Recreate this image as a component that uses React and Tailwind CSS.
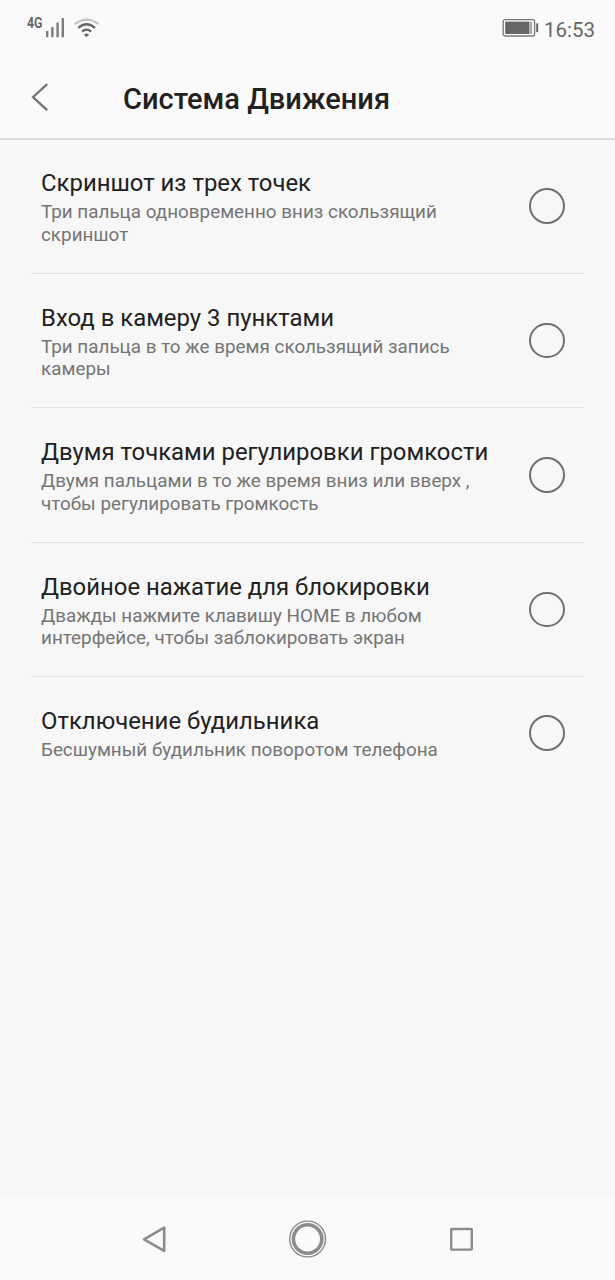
const settings = [
  {
    title: 'Скриншот из трех точек',
    lines: ['Три пальца одновременно вниз скользящий', 'скриншот'],
  },
  {
    title: 'Вход в камеру 3 пунктами',
    lines: ['Три пальца в то же время скользящий запись', 'камеры'],
  },
  {
    title: 'Двумя точками регулировки громкости',
    lines: ['Двумя пальцами в то же время вниз или вверх ,', 'чтобы регулировать громкость'],
  },
  {
    title: 'Двойное нажатие для блокировки',
    lines: ['Дважды нажмите клавишу HOME в любом', 'интерфейсе, чтобы заблокировать экран'],
  },
  {
    title: 'Отключение будильника',
    lines: ['Бесшумный будильник поворотом телефона'],
  },
];

function StatusBar() {
  return (
    <div className="flex h-14 items-start justify-between pl-[27px] pr-[20px] text-[#666]">
      <div className="flex pt-4">
        <span className="w-[18px] origin-left scale-x-88 text-[14px] leading-[14px] font-bold">4G</span>
        <svg className="h-[22px] w-[20px]" viewBox="0 0 20 22" fill="#7c7c7c">
          <rect x="1" y="15" width="2.4" height="6.3" rx="0.6" />
          <rect x="6.2" y="11" width="2.4" height="10.3" rx="0.6" />
          <rect x="11.4" y="6.5" width="2.4" height="14.8" rx="0.6" />
          <rect x="16.6" y="2" width="2.4" height="19.3" rx="0.6" />
        </svg>
        <svg className="ml-2 h-[22px] w-[28px]" viewBox="0 0 28 22" fill="none" strokeWidth="2.3">
          <path d="M1.7 8.2Q13.5 -1 25.6 8.2" stroke="#c4c4c4" />
          <path d="M5.2 12Q13.5 4.4 22 12" stroke="#666" />
          <path d="M9 15.7Q13.5 11.6 18.2 15.7" stroke="#666" />
          <path d="M11.4 18.6Q13.5 17.3 15.6 18.6L13.5 20.8Z" fill="#666" strokeWidth="1" stroke="#666" />
        </svg>
      </div>
      <div className="flex pt-[17px]">
        <svg className="h-[20px] w-[37px]" viewBox="0 0 37 20">
          <rect x="1.2" y="2.6" width="31.4" height="16.4" rx="2" fill="#fff" stroke="#777" strokeWidth="1.3" />
          <rect x="3.2" y="4.6" width="24" height="12.4" fill="#666" />
          <rect x="27.2" y="4.6" width="3" height="12.4" fill="#aaa" />
          <rect x="34.2" y="6.2" width="2" height="9" rx="0.7" fill="#666" />
        </svg>
        <span className="ml-[5px] pt-px text-[20.5px] leading-6">16:53</span>
      </div>
    </div>
  );
}

function Header() {
  return (
    <header className="flex h-[84px] items-center border-b-2 border-[#dedede] pl-[31px]">
      <svg className="h-7 w-[18px]" viewBox="0 0 18 28" fill="none" stroke="#757575" strokeWidth="2.3">
        <path d="M16.2 1.2L2 14.2L16.2 27.2" />
      </svg>
      <h1 className="ml-[74px] pt-[3px] text-[29px] leading-8 font-medium text-[#212121]">Система Движения</h1>
    </header>
  );
}

function SettingRow({ title, lines }) {
  return (
    <li className="mx-[31px] flex items-center justify-between border-b border-[#e2e2e2] pt-[29px] pr-[19.5px] pb-[27.1px] pl-[10px] last:border-b-0">
      <div>
        <h2 className="pb-[2px] text-[23.9px] leading-[31px] whitespace-nowrap text-[#212121]">{title}</h2>
        {lines.map((line) => (
          <p key={line} className="text-[18.85px] leading-[22.2px] whitespace-nowrap text-[#757575]">{line}</p>
        ))}
      </div>
      <span className="relative -top-[1px] size-[35.5px] shrink-0 rounded-full border-2 border-[#707070]" />
    </li>
  );
}

function NavBar() {
  return (
    <nav className="flex h-[82px] items-center justify-between bg-[#fafafa] pr-[140px] pl-[141px]">
      <svg className="h-7 w-[26px]" viewBox="0 0 26 28" fill="none" stroke="#8c8c8c" strokeWidth="2.6" strokeLinejoin="round">
        <path d="M23.2 2.7V25.9L3 14.3Z" />
      </svg>
      <svg className="size-[38px]" viewBox="0 0 38 38" fill="none" stroke="#8c8c8c">
        <circle cx="18.6" cy="19" r="17.9" strokeWidth="1.4" />
        <circle cx="18.6" cy="19" r="14.2" strokeWidth="3.6" />
      </svg>
      <svg className="size-[26px]" viewBox="0 0 26 26" fill="none" stroke="#8c8c8c" strokeWidth="2.4">
        <rect x="2.2" y="3" width="20.6" height="20.6" rx="0.5" />
      </svg>
    </nav>
  );
}

export default function App() {
  return (
    <div className="flex h-[1280px] w-[615px] flex-col overflow-hidden bg-[#f7f7f7] font-['Roboto',sans-serif]">
      <div className="bg-[#fafafa]">
        <StatusBar />
        <Header />
      </div>
      <ul className="-mt-[0.6px] flex-1">
        {settings.map((item) => (
          <SettingRow key={item.title} {...item} />
        ))}
      </ul>
      <NavBar />
    </div>
  );
}
